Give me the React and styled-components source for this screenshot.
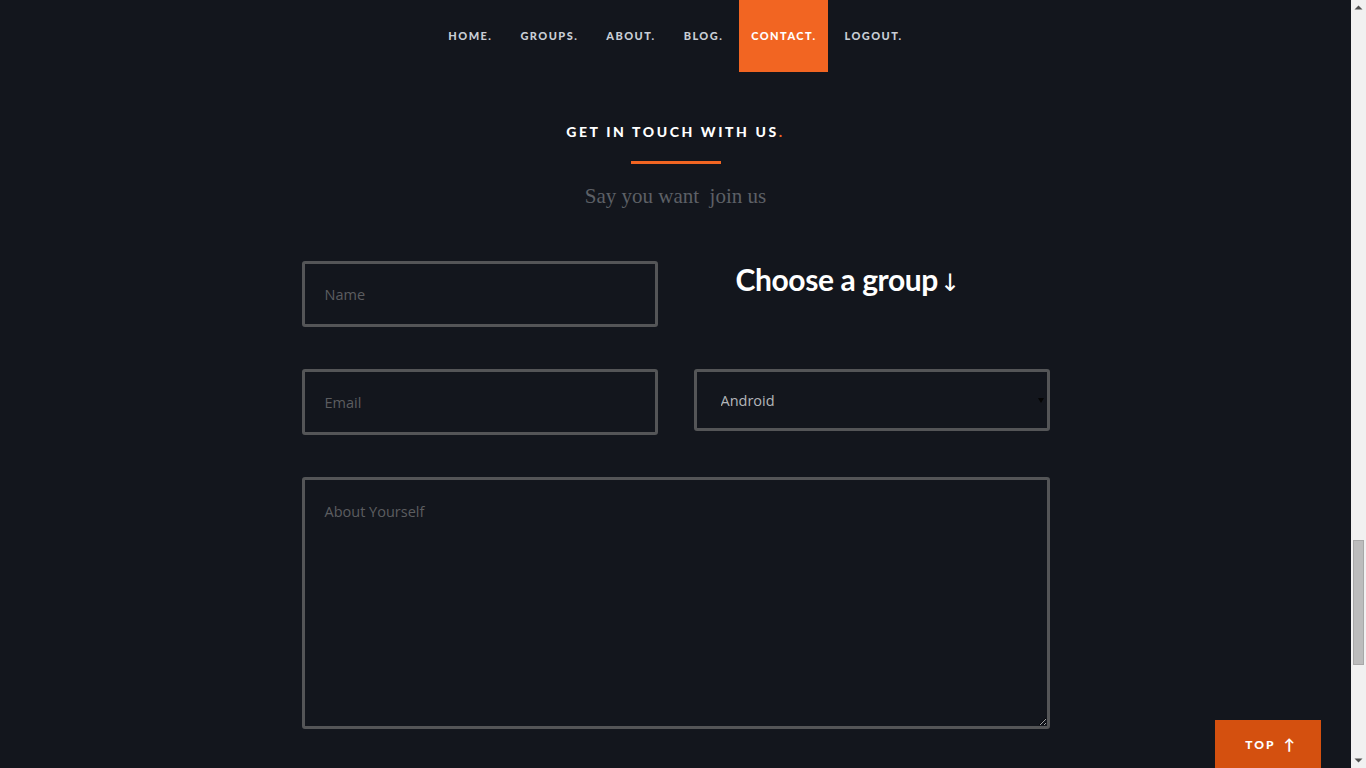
import React from "react";
import styled, { createGlobalStyle } from "styled-components";

const GlobalStyle = createGlobalStyle`
  html, body {
    margin: 0;
    padding: 0;
    background: #13161d;
  }
  body {
    font-family: Lato, "Open Sans", sans-serif;
  }
  * {
    box-sizing: border-box;
  }
`;

const links = ["HOME.", "GROUPS.", "ABOUT.", "BLOG.", "CONTACT.", "LOGOUT."];

function App() {
  return (
    <Page>
      <GlobalStyle />
      <Nav>
        {links.map((l) => (
          <NavItem key={l} href="#" $active={l === "CONTACT."}>
            {l}
          </NavItem>
        ))}
      </Nav>

      <Section>
        <Title>
          GET IN TOUCH WITH US<Dot>.</Dot>
        </Title>
        <Rule />
        <Subtitle>Say you want&nbsp; join us</Subtitle>

        <Form onSubmit={(e) => e.preventDefault()}>
          <Column>
            <Field type="text" placeholder="Name" />
            <Field type="email" placeholder="Email" />
          </Column>
          <Column>
            <GroupTitle>
              Choose a group<Arrow>↓</Arrow>
            </GroupTitle>
            <SelectWrap>
              <Select defaultValue="android">
                <option value="android">Android</option>
                <option value="ios">iOS</option>
                <option value="web">Web</option>
              </Select>
            </SelectWrap>
          </Column>
          <Message placeholder="About Yourself" />
        </Form>
      </Section>

      <TopButton href="#">
        TOP <span>↑</span>
      </TopButton>

      <ScrollRail>
        <svg width="15" height="15" viewBox="0 0 15 15">
          <path d="M3.5 9.5 L7.5 5.5 L11.5 9.5 Z" fill="#505050" />
        </svg>
        <Track>
          <Thumb />
        </Track>
        <svg width="15" height="15" viewBox="0 0 15 15">
          <path d="M3.5 5.5 L11.5 5.5 L7.5 9.5 Z" fill="#505050" />
        </svg>
      </ScrollRail>
    </Page>
  );
}

const Page = styled.div`
  min-height: 100vh;
  margin-right: 15px;
  padding-bottom: 40px;
  background: #13161d;
`;

const Nav = styled.nav`
  display: flex;
  justify-content: center;
  height: 72px;
`;

const NavItem = styled.a`
  display: flex;
  align-items: center;
  padding: 0 12px 1px 12px;
  font-family: Lato, sans-serif;
  font-weight: 900;
  font-size: 11px;
  letter-spacing: 1.45px;
  text-decoration: none;
  color: ${(p) => (p.$active ? "#ffffff" : "#c9ced6")};
  background: ${(p) => (p.$active ? "#f26522" : "transparent")};
  margin: 0 2px;
`;

const Section = styled.section`
  width: 748px;
  margin: 0 auto;
  display: flex;
  flex-direction: column;
  align-items: center;
  padding-top: 51px;
`;

const Title = styled.h2`
  margin: 0;
  font-family: Lato, sans-serif;
  font-weight: 900;
  font-size: 14px;
  letter-spacing: 2.6px;
  color: #ffffff;
  line-height: 18px;
`;

const Dot = styled.span`
  color: #f26522;
`;

const Rule = styled.div`
  width: 90px;
  height: 3px;
  background: #f26522;
  margin-top: 20px;
`;

const Subtitle = styled.p`
  margin: 20px 0 0;
  font-family: "Liberation Serif", "DejaVu Serif", serif;
  font-size: 21px;
  color: #5d6066;
  line-height: 24px;
`;

const Form = styled.form`
  width: 100%;
  margin-top: 53px;
  display: grid;
  grid-template-columns: 1fr 1fr;
  column-gap: 36px;
  row-gap: 42px;
`;

const Column = styled.div`
  display: flex;
  flex-direction: column;
  gap: 42px;
`;

const fieldBase = `
  width: 100%;
  background: #13161d;
  border: 3px solid #545557;
  border-radius: 3px;
  font-family: "Open Sans", Lato, sans-serif;
  font-size: 14.5px;
  outline: none;
`;

const Field = styled.input`
  ${fieldBase}
  height: 66px;
  padding: 0 20px;
  color: #cccccc;
  &::placeholder {
    color: #5c5d60;
  }
`;

const GroupTitle = styled.h3`
  margin: 0;
  height: 66px;
  padding-left: 42px;
  font-family: Lato, sans-serif;
  font-weight: 700;
  font-size: 30px;
  line-height: 36px;
  letter-spacing: -0.4px;
  color: #ffffff;
`;

const Arrow = styled.span`
  font-family: "DejaVu Sans", sans-serif;
  font-weight: 400;
  font-size: 24px;
  margin-left: 2px;
`;

const SelectWrap = styled.div`
  position: relative;

  &::after {
    content: "";
    position: absolute;
    right: 6px;
    top: 29px;
    border-left: 3px solid transparent;
    border-right: 3px solid transparent;
    border-top: 5px solid #050505;
    pointer-events: none;
  }
`;

const Select = styled.select`
  ${fieldBase}
  appearance: none;
  height: 62px;
  padding: 0 20px 0 24px;
  color: #b4b6ba;
`;

const Message = styled.textarea`
  ${fieldBase}
  grid-column: 1 / -1;
  height: 252px;
  padding: 22px 20px;
  color: #cccccc;
  resize: vertical;
  &::placeholder {
    color: #5c5d60;
  }
`;

const TopButton = styled.a`
  position: fixed;
  right: 45px;
  bottom: 0;
  width: 106px;
  height: 48px;
  display: flex;
  align-items: center;
  justify-content: center;
  gap: 8px;
  padding-left: 4px;
  background: #d4500f;
  color: #ffffff;
  text-decoration: none;
  font-family: Lato, sans-serif;
  font-weight: 900;
  font-size: 12px;
  letter-spacing: 2px;

  span {
    font-size: 15px;
    font-weight: 700;
    letter-spacing: 0;
  }
`;

const ScrollRail = styled.div`
  position: fixed;
  top: 0;
  right: 0;
  width: 15px;
  height: 100vh;
  background: #f1f1f1;
  display: flex;
  flex-direction: column;
`;

const Track = styled.div`
  flex: 1;
  padding: 0 2px;
  display: flex;
  flex-direction: column;
  justify-content: flex-end;
  padding-bottom: 88px;
`;

const Thumb = styled.div`
  height: 125px;
  background: #bcbcbc;
  border: 1px solid #a8a8a8;
`;

export default App;
